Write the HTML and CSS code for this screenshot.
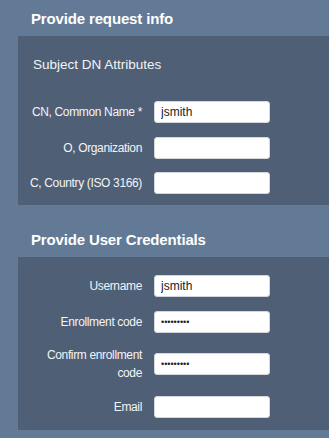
FILE: index.html
```html
<!DOCTYPE html>
<html lang="en">
<head>
  <meta charset="UTF-8">
  <title>Provide request info</title>
  <link rel="stylesheet" href="styles.css">
</head>
<body>

  <div class="section">
    <h2>Provide request info</h2>
    <div class="panel">
      <h3>Subject DN Attributes</h3>
      <div class="rows">
        <div class="row">
          <label for="cn">CN, Common Name *</label>
          <input type="text" id="cn" value="jsmith">
        </div>
        <div class="row">
          <label for="org">O, Organization</label>
          <input type="text" id="org">
        </div>
        <div class="row">
          <label for="country">C, Country (ISO 3166)</label>
          <input type="text" id="country">
        </div>
      </div>
    </div>
  </div>

  <div class="section second">
    <h2>Provide User Credentials</h2>
    <div class="panel">
      <div class="rows">
        <div class="row">
          <label for="username">Username</label>
          <input type="text" id="username" value="jsmith">
        </div>
        <div class="row">
          <label for="code">Enrollment code</label>
          <input type="password" id="code" value="secret123">
        </div>
        <div class="row">
          <label for="code2">Confirm enrollment code</label>
          <input type="password" id="code2" value="secret123">
        </div>
        <div class="row">
          <label for="email">Email</label>
          <input type="text" id="email">
        </div>
      </div>
    </div>
  </div>

</body>
</html>
```

FILE: styles.css
```css
body { margin: 0; background: #627a96; font-family: "Liberation Sans", Arial, sans-serif; color: #f2f4f6; height: 438px; overflow: hidden; }
.section h2 { margin: 0; padding: 10px 0 0 31px; height: 26px; font-size: 15px; font-weight: bold; color: #fff; line-height: 18px; letter-spacing: -0.15px; }
.section.second { margin-top: 16px; }
.panel { margin-left: 18px; background: #4f5f75; padding: 19px 0 11px; }
.section.second .panel { padding-top: 18px; padding-bottom: 12px; }
.panel h3 { margin: 0 0 26px 15px; font-size: 13.5px; font-weight: normal; line-height: 20px; color: #f2f4f6; }
.rows { display: flex; flex-direction: column; gap: 13.5px; }
.row { display: flex; align-items: center; gap: 12px; }
.row label { width: 124px; box-sizing: border-box; padding-left: 8px; text-align: right; font-size: 12px; line-height: 18px; letter-spacing: -0.35px; }
.row input { width: 116px; height: 22px; box-sizing: border-box; border: 1px solid #d4d8dc; border-radius: 3px; background: #fff; padding: 0 6px; font-family: "Liberation Sans", Arial, sans-serif; font-size: 12px; color: #222; }
.row input[type="password"] { font-size: 9px; }
```
